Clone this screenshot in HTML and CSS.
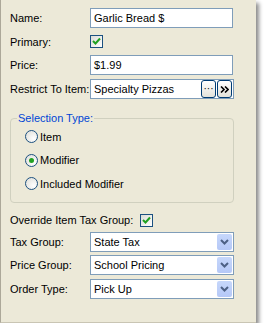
FILE: index.html
```html
<!DOCTYPE html>
<html lang="en">
<head>
  <meta charset="UTF-8">
  <title>Modifier Properties</title>
  <link rel="stylesheet" href="styles.css">
</head>
<body>
  <div class="panel">
    <div class="row row-name">
      <label class="lbl">Name:</label>
      <div class="field">Garlic Bread $</div>
    </div>
    <div class="row row-primary">
      <label class="lbl">Primary:</label>
      <span class="check">
        <svg width="9" height="9" viewBox="0 0 9 9"><path d="M1 4 L3.5 6.5 L8 1.5" fill="none" stroke="#21a121" stroke-width="2"/></svg>
      </span>
    </div>
    <div class="row row-price">
      <label class="lbl">Price:</label>
      <div class="field">$1.99</div>
    </div>
    <div class="row row-restrict">
      <label class="lbl">Restrict To Item:</label>
      <div class="field field-btns">
        <span class="field-text">Specialty Pizzas</span>
        <span class="xp-btn">&middot;&middot;&middot;</span>
        <span class="xp-btn">
          <svg width="9" height="7" viewBox="0 0 9 7"><path d="M1 0.5 L4 3.5 L1 6.5 M5 0.5 L8 3.5 L5 6.5" fill="none" stroke="#000" stroke-width="1.6"/></svg>
        </span>
      </div>
    </div>

    <fieldset class="group">
      <legend>Selection Type:</legend>
      <div class="radio-row"><span class="radio"></span>Item</div>
      <div class="radio-row"><span class="radio on"></span>Modifier</div>
      <div class="radio-row"><span class="radio"></span>Included Modifier</div>
    </fieldset>

    <div class="row row-override">
      <label class="lbl">Override Item Tax Group:</label>
      <span class="check">
        <svg width="9" height="9" viewBox="0 0 9 9"><path d="M1 4 L3.5 6.5 L8 1.5" fill="none" stroke="#21a121" stroke-width="2"/></svg>
      </span>
    </div>
    <div class="row row-tax">
      <label class="lbl">Tax Group:</label>
      <div class="field combo">
        <span class="field-text">State Tax</span>
        <span class="drop"><svg width="9" height="6" viewBox="0 0 9 6"><path d="M1 1 L4.5 4.5 L8 1" fill="none" stroke="#4d6185" stroke-width="2"/></svg></span>
      </div>
    </div>
    <div class="row row-pgroup">
      <label class="lbl">Price Group:</label>
      <div class="field combo">
        <span class="field-text">School Pricing</span>
        <span class="drop"><svg width="9" height="6" viewBox="0 0 9 6"><path d="M1 1 L4.5 4.5 L8 1" fill="none" stroke="#4d6185" stroke-width="2"/></svg></span>
      </div>
    </div>
    <div class="row row-order">
      <label class="lbl">Order Type:</label>
      <div class="field combo">
        <span class="field-text">Pick Up</span>
        <span class="drop"><svg width="9" height="6" viewBox="0 0 9 6"><path d="M1 1 L4.5 4.5 L8 1" fill="none" stroke="#4d6185" stroke-width="2"/></svg></span>
      </div>
    </div>
  </div>
</body>
</html>
```
FILE: styles.css
```css
body {
  margin: 0;
  background: #fff;
  font-family: "Liberation Sans", Arial, sans-serif;
  font-size: 11px;
  color: #000;
}
.panel {
  width: 246px;
  height: 314px;
  padding: 8px 0 0 9px;
  background: #ece9d8;
  border-left: 1px solid #aca899;
  border-bottom: 1px solid #c9c5b4;
  box-shadow: 3px 3px 4px rgba(0, 0, 0, 0.45);
}
.row {
  display: flex;
  align-items: center;
}
.lbl {
  width: 80px;
  flex: none;
  white-space: nowrap;
}
.field {
  width: 138px;
  height: 18px;
  border: 1px solid #7f9db9;
  background: #fff;
  padding-left: 3px;
  line-height: 18px;
}
.row-primary { margin-top: 7px; }
.row-price { margin-top: 7px; }
.row-restrict { margin-top: 4px; }
.row-override { margin-top: 11px; }
.row-tax { margin-top: 5px; }
.row-pgroup { margin-top: 3px; }
.row-order { margin-top: 4px; }

.check {
  width: 11px;
  height: 11px;
  border: 1px solid #1c5180;
  background: linear-gradient(135deg, #dcdcd6, #fff);
  display: flex;
  align-items: center;
  justify-content: center;
}
.row-override .lbl { width: 130px; }

.field-btns, .combo {
  display: flex;
  align-items: center;
  padding-right: 1px;
}
.field-text {
  flex: 1;
  white-space: nowrap;
  overflow: hidden;
}
.xp-btn {
  width: 13px;
  height: 16px;
  margin-left: 1px;
  border: 1px solid #003c74;
  border-radius: 3px;
  background: linear-gradient(#fff, #e3e2da);
  display: flex;
  align-items: center;
  justify-content: center;
  font-size: 10px;
  line-height: 1;
}
.drop {
  width: 15px;
  height: 16px;
  border-radius: 2px;
  background: linear-gradient(#c6d7fb, #b5c8f7);
  display: flex;
  align-items: center;
  justify-content: center;
}

.group {
  margin: 12px 0 0 0;
  width: 224px;
  padding: 0 0 6px 14px;
  border: 1px solid #d0d0bf;
  border-radius: 4px;
  box-sizing: border-box;
}
.group legend {
  color: #0046d5;
  font-size: 11px;
  line-height: 14px;
  padding: 0 1px;
  margin-left: -8px;
}
.radio-row {
  display: flex;
  align-items: center;
  height: 23.5px;
}
.radio {
  width: 11px;
  height: 11px;
  border: 1px solid #1c5180;
  border-radius: 50%;
  background: radial-gradient(circle at 70% 70%, #fff, #dcdcd6);
  margin-right: 2px;
  display: flex;
  align-items: center;
  justify-content: center;
}
.radio.on::after {
  content: "";
  width: 5px;
  height: 5px;
  border-radius: 50%;
  background: #21a121;
}
```
